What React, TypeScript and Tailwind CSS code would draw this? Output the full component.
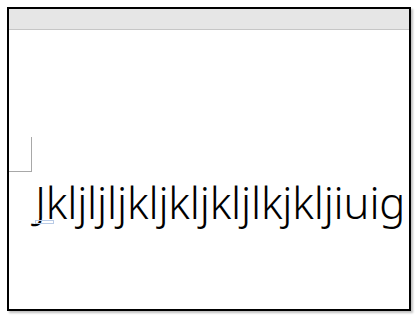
export default function App() {
  return (
    <div className="h-[318px] w-[418px] bg-white p-[7px]">
      <div className="flex h-[304px] w-[404px] flex-col border-2 border-black shadow-[2px_2px_2px_rgba(0,0,0,0.25)]">
        <div className="h-[21px] border-b border-[#c6c6c6] bg-[#e6e6e6]" />
        <div className="flex-1 bg-white">
          <div className="mt-[107px] h-[35px] w-[23px] border-r border-b border-[#a8a8a8]" />
          <div className="relative ml-[26px] mt-[1px]">
            <div
              className="whitespace-nowrap text-[43.5px] font-light leading-[58px] tracking-[-0.15px] text-black"
              style={{ fontFamily: '"Noto Sans", "DejaVu Sans", sans-serif' }}
            >
              Jkljljljkljkljkljlkjkljiuig
            </div>
            <div className="absolute left-0 top-[47px] h-[4px] w-[19px] border border-[#b9cbe6]" />
          </div>
        </div>
      </div>
    </div>
  );
}
